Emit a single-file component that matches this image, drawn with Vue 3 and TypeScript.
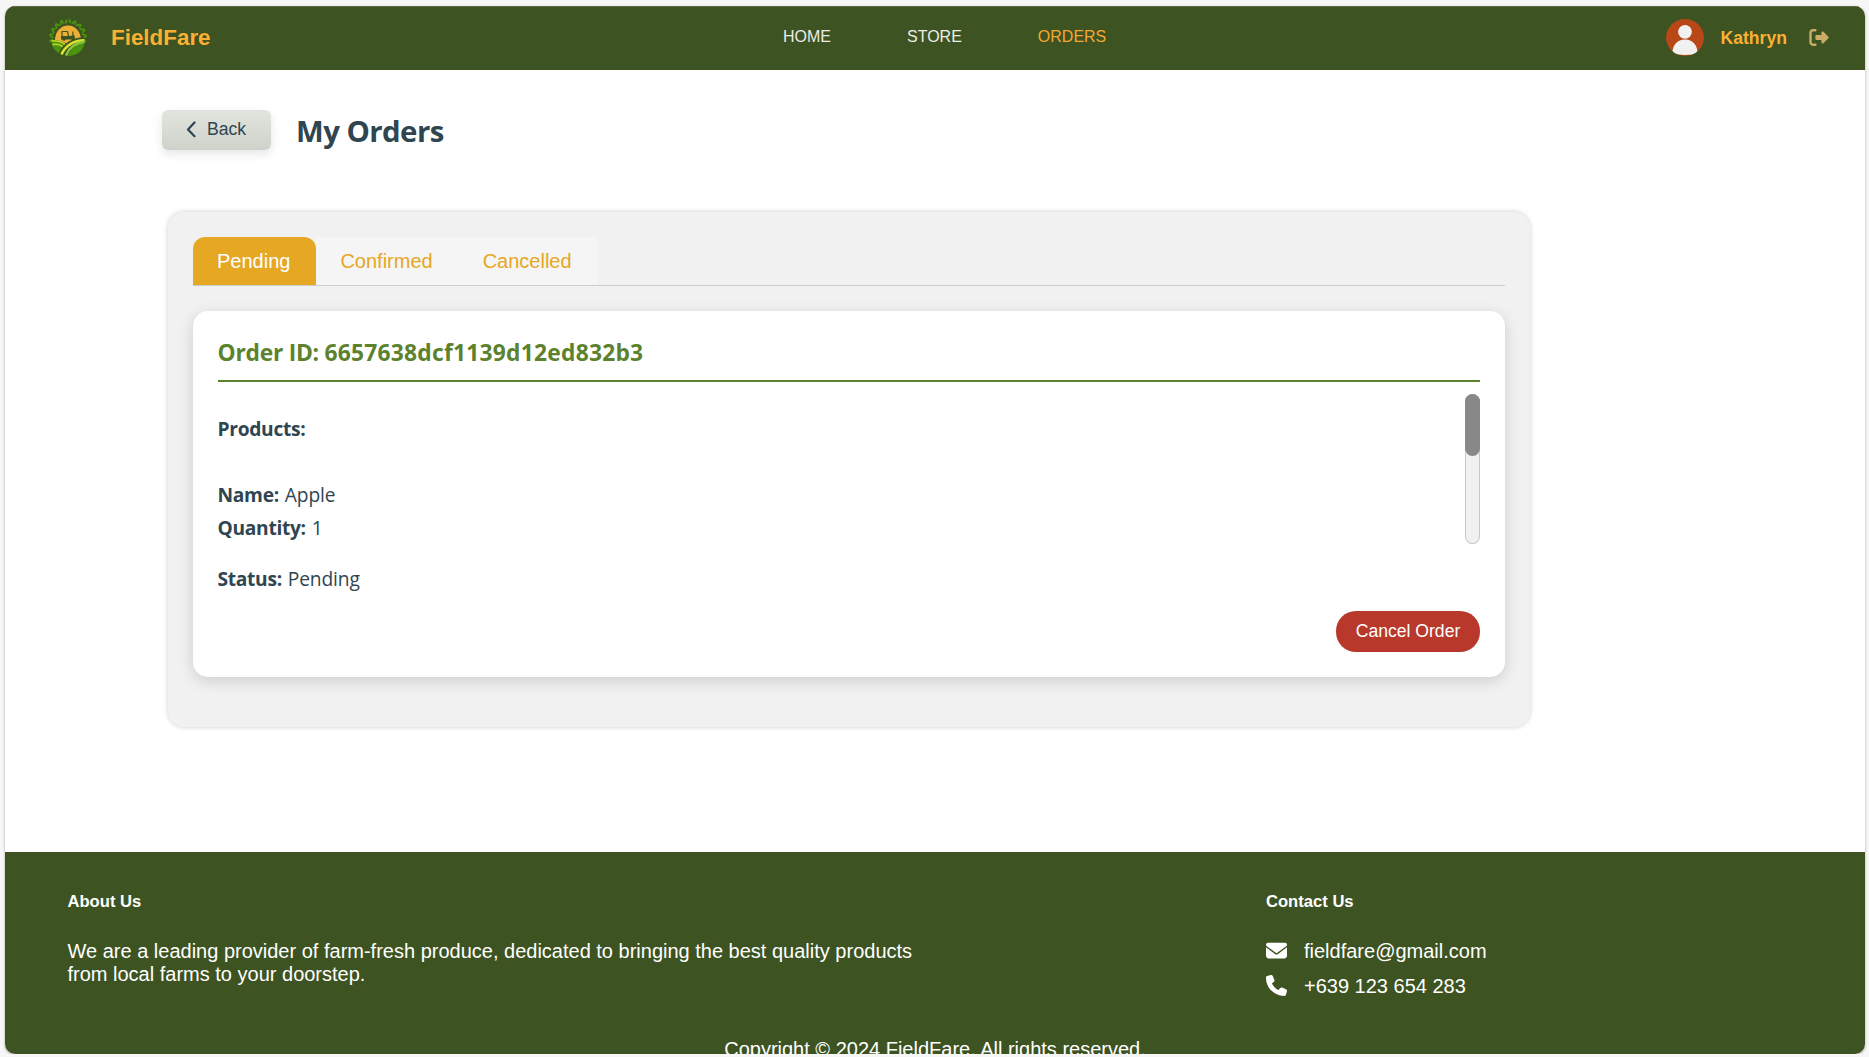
<script setup lang="ts">
import { ref } from 'vue'

const links = ['HOME', 'STORE', 'ORDERS']
const activeLink = ref('ORDERS')
const tabs = ['Pending', 'Confirmed', 'Cancelled']
const activeTab = ref('Pending')
const order = {
  id: '6657638dcf1139d12ed832b3',
  product: 'Apple',
  quantity: 1,
  status: 'Pending',
}
</script>

<template>
  <div class="window">
    <header class="navbar">
      <div class="brand">
        <svg class="logo" viewBox="0 0 40 40">
          <g fill="#4a940f">
            <g v-for="a in [-92, -72, -52, -32, -13, 13, 32, 52, 72, 92]" :key="a" :transform="`rotate(${a} 20 20)`">
              <ellipse cx="18.2" cy="3" rx="1" ry="2.5" transform="rotate(-32 18.2 3)" />
              <ellipse cx="21.8" cy="3.6" rx="1" ry="2.5" transform="rotate(36 21.8 3.6)" />
            </g>
          </g>
          <path d="M17 3.8h6" stroke="#4a940f" stroke-width="0.8" />
          <path d="M7 22a13 14.500 0 0 1 26 0l-8 2-5 2-5-2z" fill="#eeaf36" />
          <path d="M14 18v-4.500h5.500l1 4.500" fill="none" stroke="#3d5321" stroke-width="1.200" />
          <path d="M13 18h8l5-.8.8 1v3.300H13zM24.300 13.500h1.200v4.500h-1.200z" fill="#3d5321" />
          <circle cx="16" cy="21" r="1.800" fill="#3d5321" />
          <circle cx="25" cy="21.400" r="1.500" fill="#3d5321" />
          <path d="M3 22.500c7-.7 12 .5 15.500 4.200-2.200 3.400-4.200 6.300-7.200 9C7 33 3.500 28.500 3 22.500z" fill="#4a940f" />
          <path d="M37 22.500c-7 2-14 8-17 15.400 9 .3 16.500-6 17-15.400z" fill="#4a940f" />
          <path d="M3.500 22.800c7 0 11.500 1 14.500 4.700M4.500 26.500c5-.6 9 .4 11.500 3.500" fill="none" stroke="#c3d62a" stroke-width="1.500" />
          <path d="M36.500 22.200C26 22 17 28 13 37" fill="none" stroke="#3d5321" stroke-width="6" />
          <path d="M36.500 22.200C26 22 17 28 13.500 36.500" fill="none" stroke="#d8e32c" stroke-width="2.600" />
          <path d="M36.500 23.800C27 25 21 30 18 37.500" fill="none" stroke="#8cc63f" stroke-width="2.500" />
        </svg>
        <span class="brand-name">FieldFare</span>
      </div>
      <nav class="links">
        <a v-for="link in links" :key="link" :class="{ active: link === activeLink }" @click="activeLink = link">{{ link }}</a>
      </nav>
      <div class="user">
        <svg class="avatar" viewBox="0 0 38 37">
          <defs><clipPath id="avatar-disc"><ellipse cx="19" cy="18.500" rx="19" ry="18.500" /></clipPath></defs>
          <g clip-path="url(#avatar-disc)">
            <rect width="38" height="37" fill="#b84818" />
            <circle cx="19" cy="12.800" r="6.900" fill="#f1f1f1" />
            <path d="M6.300 35c0-9 5-14.500 12.700-14.500S31.700 26 31.700 35c-7 1.200-18.400 1.200-25.400 0z" fill="#f1f1f1" />
          </g>
        </svg>
        <span class="user-name">Kathryn</span>
        <svg class="logout" viewBox="0 32 512 448">
          <path fill="#c9ad66" d="M502.600 278.600c12.500-12.500 12.500-32.800 0-45.300l-128-128c-9.200-9.200-22.900-11.900-34.900-6.900S320 115.100 320 128v64H192c-17.700 0-32 14.300-32 32v64c0 17.700 14.300 32 32 32h128v64c0 12.900 7.800 24.600 19.800 29.600s25.700 2.200 34.900-6.900l128-128zM160 96c17.700 0 32-14.300 32-32s-14.300-32-32-32H96C43 32 0 75 0 128v256c0 53 43 96 96 96h64c17.700 0 32-14.300 32-32s-14.300-32-32-32H96c-17.700 0-32-14.300-32-32V128c0-17.700 14.300-32 32-32h64z" />
        </svg>
      </div>
    </header>

    <main class="content">
      <div class="heading">
        <button class="back">
          <svg class="chevron" viewBox="0 0 10 17"><path d="M8.500 1.500 2 8.400l6.500 6.800" /></svg>
          <span>Back</span>
        </button>
        <h1>My Orders</h1>
      </div>

      <section class="panel">
        <div class="tabs">
          <button v-for="tab in tabs" :key="tab" class="tab" :class="{ active: tab === activeTab }" @click="activeTab = tab">{{ tab }}</button>
        </div>
        <article class="card">
          <h2><span class="id-label">Order ID: </span><span class="id-value">{{ order.id }}</span></h2>
          <div class="products">
            <div class="product-list">
              <p><b>Products:</b></p>
              <p class="first"><b>Name:</b><span>{{ order.product }}</span></p>
              <p><b>Quantity:</b><span>{{ order.quantity }}</span></p>
            </div>
            <div class="track"><div class="thumb"></div></div>
          </div>
          <p class="status"><b>Status:</b><span>{{ order.status }}</span></p>
          <div class="actions"><button class="cancel">Cancel Order</button></div>
        </article>
      </section>
    </main>

    <footer class="footer">
      <div class="footer-columns">
        <div class="about">
          <h5>About Us</h5>
          <p>We are a leading provider of farm-fresh produce, dedicated to bringing the best quality products<br>from local farms to your doorstep.</p>
        </div>
        <div class="contact">
          <h5>Contact Us</h5>
          <div class="contact-row">
            <svg viewBox="0 0 512 512"><path fill="#fff" d="M48 64C21.500 64 0 85.500 0 112c0 15.100 7.100 29.300 19.200 38.400l217.600 163.200c11.400 8.500 27 8.500 38.400 0l217.600-163.200c12.100-9.100 19.200-23.300 19.200-38.400 0-26.500-21.500-48-48-48H48zM0 176v208c0 35.300 28.700 64 64 64h384c35.300 0 64-28.700 64-64V176L294.400 339.200c-22.800 17.100-54 17.100-76.800 0L0 176z" /></svg>
            <span>fieldfare@gmail.com</span>
          </div>
          <div class="contact-row">
            <svg viewBox="0 0 512 512"><path fill="#fff" d="M164.900 24.600c-7.700-18.600-28-28.500-47.400-23.200l-88 24C12.100 30.200 0 46 0 64c0 247.400 200.600 448 448 448 18 0 33.800-12.100 38.600-29.500l24-88c5.300-19.400-4.600-39.700-23.200-47.400l-96-40c-16.300-6.800-35.200-2.100-46.300 11.600L304.700 368C234.300 334.700 177.300 277.700 144 207.300l49.300-40.300c13.700-11.200 18.400-30 11.600-46.300l-40-96z" /></svg>
            <span>+639 123 654 283</span>
          </div>
        </div>
      </div>
      <p class="copyright">Copyright © 2024 FieldFare. All rights reserved.</p>
    </footer>
  </div>
</template>

<style>
body {
  background: #f7f7f7;
  overflow: hidden;
}
</style>

<style scoped>
* {
  box-sizing: border-box;
}
h1, h2, h5, p {
  margin: 0;
}
button {
  border: 0;
  font-family: inherit;
}
svg {
  display: block;
  flex: none;
}
.window {
  width: 1860px;
  height: 1048px;
  margin: 6px 0 0 5px;
  overflow: hidden;
  display: flex;
  flex-direction: column;
  background: #fff;
  border-radius: 10px;
  box-shadow: 0 1px 3px rgba(0, 0, 0, 0.3);
  font-family: "Liberation Sans", Arial, sans-serif;
}
.navbar {
  flex: none;
  height: 64px;
  padding: 0 36px 2px 43px;
  display: grid;
  grid-template-columns: 735px 1fr auto;
  align-items: center;
  background: #3d5321;
  border-top: 1px solid #5e7048;
}
.brand {
  display: flex;
  align-items: center;
  gap: 23px;
}
.logo {
  width: 40px;
  height: 40px;
}
.brand-name {
  color: #fbb034;
  font-size: 22.4px;
  font-weight: bold;
  line-height: 26px;
}
.links {
  display: flex;
  gap: 76px;
  font-size: 16px;
  line-height: 20px;
  padding-bottom: 1px;
}
.links a {
  color: #ecece4;
}
.links a.active {
  color: #f5a82e;
}
.user {
  display: flex;
  align-items: center;
}
.avatar {
  width: 38px;
  height: 37px;
}
.user-name {
  margin: 0 22px 0 17px;
  color: #fbb034;
  font-size: 17.6px;
  font-weight: bold;
  line-height: 22px;
}
.logout {
  width: 20px;
  height: 17px;
}
.content {
  flex: none;
  height: 782px;
  padding: 40px 334px 0 157px;
}
.heading {
  display: flex;
  height: 40px;
  gap: 25px;
}
.back {
  width: 109px;
  height: 40px;
  padding: 0 0 2px 24px;
  display: flex;
  align-items: center;
  gap: 11px;
  border-radius: 6px;
  background: linear-gradient(#e2e5df, #cdd2cb);
  box-shadow: 0 4px 10px rgba(0, 0, 0, 0.1);
  color: #2f4550;
  font-size: 17.6px;
}
.chevron {
  width: 10px;
  height: 17px;
}
.chevron path {
  fill: none;
  stroke: #2f4550;
  stroke-width: 2.2;
  stroke-linecap: round;
  stroke-linejoin: round;
}
h1 {
  color: #2f4550;
  font: bold 29.4px/42px "Open Sans", sans-serif;
  letter-spacing: -0.55px;
}
.panel {
  width: 1362px;
  height: 515px;
  margin: 62px 0 0 6px;
  padding: 25px;
  background: #f1f1f1;
  border-radius: 16px;
  box-shadow: 0 0 5px rgba(0, 0, 0, 0.2);
}
.tabs {
  display: flex;
  height: 49px;
  border-bottom: 1px solid #ccc;
}
.tab {
  height: 48px;
  padding: 0 26px 0 24px;
  background: #f5f5f5;
  color: #e6a723;
  font-size: 20px;
}
.tab.active {
  background: #e6a723;
  color: #fff;
  border-radius: 12px 12px 0 0;
}
.card {
  height: 366px;
  margin-top: 25px;
  padding: 25px;
  background: #fff;
  border-radius: 15px;
  box-shadow: 0 4px 15px rgba(0, 0, 0, 0.15);
  color: #2f4550;
  font-family: "Open Sans", sans-serif;
}
h2 {
  height: 46px;
  border-bottom: 2px solid #5c822e;
  color: #5c822e;
  font-size: 22.8px;
  line-height: 33px;
  text-indent: -0.5px;
}
.id-label {
  letter-spacing: -0.25px;
}
.id-value {
  letter-spacing: 0.23px;
}
.products {
  display: flex;
  justify-content: space-between;
  margin-top: 12px;
}
.card p {
  font-size: 19.2px;
  line-height: 33px;
  letter-spacing: -0.15px;
  text-indent: -0.5px;
}
.card b {
  margin-right: 6px;
  letter-spacing: -0.3px;
}
.product-list {
  padding-top: 18px;
}
.product-list .first {
  margin-top: 33px;
}
.track {
  width: 15px;
  height: 150px;
  background: #f1f1f1;
  border-radius: 8px;
  box-shadow: inset 0 0 0 1px #c8c8c8;
}
.thumb {
  height: 62px;
  background: #888;
  border-radius: 8px;
}
.card .status {
  margin-top: 18px;
}
.actions {
  display: flex;
  justify-content: flex-end;
  margin-top: 16px;
}
.cancel {
  width: 144px;
  height: 41px;
  padding: 0 0 1px;
  border-radius: 20px;
  background: #b8392b;
  color: #fff;
  font: 17.6px "Liberation Sans", Arial, sans-serif;
}
.footer {
  flex: none;
  height: 202px;
  padding: 39px 62px 0;
  background: #3d5321;
  color: #fff;
  font-size: 20px;
}
.footer-columns {
  display: grid;
  grid-template-columns: 1199px 1fr;
  height: 147px;
}
h5 {
  font-size: 16.6px;
  line-height: 22px;
  margin-bottom: 27px;
}
.about {
  padding-left: 0.5px;
}
.about p {
  line-height: 23px;
}
.contact-row {
  display: flex;
  align-items: center;
  gap: 17px;
  height: 23px;
  margin-bottom: 12px;
}
.contact-row svg {
  width: 21px;
  height: 21px;
  margin-bottom: 2px;
}
.copyright {
  text-align: center;
  line-height: 23px;
}
</style>
